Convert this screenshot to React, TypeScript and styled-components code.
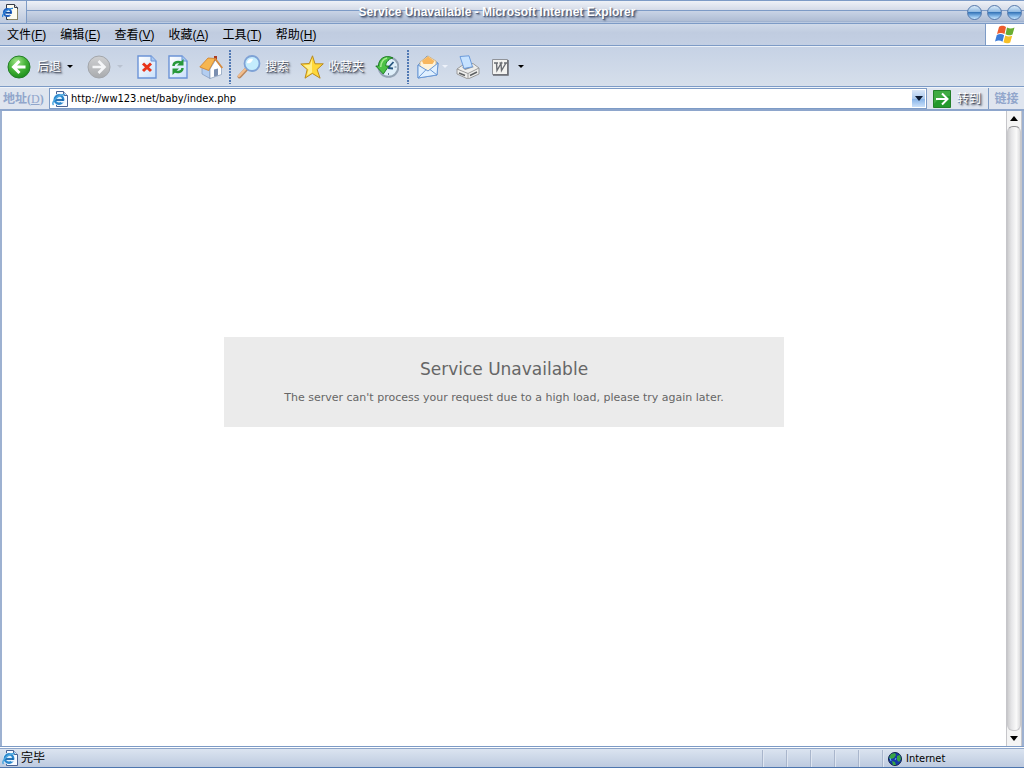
import React from 'react';
import styled, { createGlobalStyle, css } from 'styled-components';

const ui = '"Liberation Sans", "Noto Sans CJK SC", sans-serif';
const line = '#7d9bc6';

const Global = createGlobalStyle`
  * { box-sizing: border-box; }
  body { margin: 0; font: 12px/16px ${ui}; color: #000; }
  button { font: inherit; color: inherit; border: 0; padding: 0; background: none; }
  svg { display: block; flex: none; }
`;

const Window = styled.div`
  display: flex;
  flex-direction: column;
  min-height: 100vh;
  background: #cdd8e8;
`;

const TitleBar = styled.header`
  display: flex;
  height: 24px;
  border-top: 1px solid ${line};
  border-bottom: 1px solid ${line};
  background: linear-gradient(#e4e9f2, #bcc9de);
`;

const SystemIcon = styled.div`
  display: flex;
  align-items: center;
  width: 27px;
  padding-left: 2px;
  border-right: 1px solid ${line};
`;

const TitleTrack = styled.div`
  display: flex;
  flex: 1;
  align-items: center;
  padding-right: 2px;
  background: linear-gradient(#eef1f7, #d4dbe8 9px, ${line} 9px, ${line} 10px, #c9d4e6 10px, #afbdd4 20px, #93a9cb 21px, #e2eaf6 22px);
`;

const Title = styled.h1`
  flex: 1;
  margin: 0;
  font-size: 12px;
  line-height: 20px;
  text-align: center;
  color: #fff;
  text-shadow: 1px 1px 1px #45536f, 2px 2px 2px #64728c;
`;

const WindowButtons = styled.div`
  display: flex;
  gap: 5px;
`;

const Orb = styled.button`
  width: 15px;
  height: 15px;
  border: 1px solid #5478ab;
  border-radius: 50%;
  background: linear-gradient(#dcecf9, #8fb9e2 45%, #3a78ba 50%, #7db2e4 75%, #cbe8ff);
`;

const MenuBar = styled.nav`
  display: flex;
  height: 22px;
  border-bottom: 1px solid ${line};
  background: linear-gradient(#d0dae9, #c0cce0 40%, #c3cfe3);
`;

const MenuItems = styled.div`
  display: flex;
  flex: 1;
  align-items: center;
  gap: 14px;
  padding-left: 7px;
`;

const Brand = styled.div`
  display: flex;
  align-items: center;
  justify-content: center;
  width: 39px;
  border-left: 1px solid ${line};
  background: #fff;
`;

const ToolBar = styled.div`
  display: flex;
  align-items: center;
  height: 41px;
  border-top: 1px solid #eaf0f8;
  border-bottom: 1px solid ${line};
  background: linear-gradient(#c6d2e5, #d6dfeb);
`;

const Cluster = styled.div<{ $gap: number; $start: number; $end: number }>`
  display: flex;
  align-items: center;
  gap: ${(p) => p.$gap}px;
  padding-left: ${(p) => p.$start}px;
  padding-right: ${(p) => p.$end}px;
`;

const ToolButton = styled.button<{ $gap?: number; $end?: number }>`
  display: flex;
  align-items: center;
  gap: ${(p) => p.$gap ?? 4}px;
  padding-right: ${(p) => p.$end ?? 0}px;
`;

const shadowed = css`
  color: #fff;
  text-shadow: 1px 1px 1px #3c4353, 2px 2px 2px #636b7c;
`;

const ToolLabel = styled.span`
  ${shadowed}
`;

const Caret = styled.span<{ $color?: string }>`
  border: 3px solid transparent;
  border-top-color: ${(p) => p.$color ?? '#000'};
  border-bottom: 0;
`;

const Divider = styled.div`
  width: 2px;
  height: 34px;
  background: repeating-linear-gradient(#5179b4 0 2px, transparent 2px 3px);
`;

const AddressBar = styled.form`
  display: flex;
  align-items: center;
  height: 24px;
  border-top: 1px solid #eff4fa;
  border-bottom: 2px solid #8ea6cc;
  background: #dfe5ef;
`;

const AddressLabel = styled.label`
  width: 49px;
  padding-left: 3px;
  font: bold 12px/16px "Liberation Serif", "Noto Sans CJK SC", serif;
  color: #91a6cb;

  u { font-weight: normal; }
`;

const AddressField = styled.div`
  display: flex;
  flex: 1;
  align-items: center;
  height: 21px;
  padding: 1px 1px 1px 2px;
  border: 1px solid ${line};
  background: #fff;
`;

const AddressInput = styled.input`
  flex: 1;
  min-width: 0;
  padding: 1px 0 0 3px;
  border: 0;
  outline: 0;
  background: none;
  color: #000;
  font: 11px/16px "DejaVu Sans Condensed", "DejaVu Sans", sans-serif;
`;

const DropButton = styled.button`
  display: flex;
  align-items: center;
  justify-content: center;
  width: 13px;
  height: 17px;
  background: linear-gradient(#d9e6f8, #a9c8ee 50%, #8ab5e8 55%, #cbe1fa);
`;

const DropArrow = styled.span`
  border: 4px solid transparent;
  border-top: 5px solid #0b1a33;
  border-bottom: 0;
`;

const GoButton = styled.button`
  display: flex;
  align-items: center;
  gap: 6px;
  width: 61px;
  padding-left: 6px;
  ${shadowed}
`;

const Links = styled.button`
  && {
    width: 36px;
    height: 21px;
    border-left: 1px solid ${line};
    font-weight: bold;
    color: #91a6cb;
  }
`;

const Viewport = styled.div`
  display: flex;
  flex: 1;
  border: solid #9db1d1;
  border-width: 0 2px;
  background: #fff;
`;

const Page = styled.main`
  display: flex;
  flex: 1;
  flex-direction: column;
  align-items: center;
  justify-content: center;
  padding-bottom: 94px;
`;

const Notice = styled.section`
  width: 560px;
  max-width: 100%;
  padding: 20px 0;
  text-align: center;
  color: #666;
  background: #ebebeb;
  font-family: "DejaVu Sans", sans-serif;

  h2 {
    margin: 0 0 8px;
    font-size: 17px;
    font-weight: normal;
    line-height: 24px;
  }

  p {
    margin: 0;
    font-size: 11px;
    line-height: 18px;
  }
`;

const ScrollBar = styled.div`
  display: flex;
  flex-direction: column;
  width: 16px;
  border: solid #c6c6ca;
  border-width: 0 1px;
  background: #f3f3f3;
`;

const ScrollButton = styled.button`
  display: flex;
  align-items: center;
  justify-content: center;
  height: 15px;
  background: #f4f4f4;
`;

const ScrollArrow = styled.span<{ $up?: boolean }>`
  border: 4px solid transparent;
  ${(p) => (p.$up ? 'border-top: 0; border-bottom: 5px solid #000;' : 'border-bottom: 0; border-top: 5px solid #000;')}
`;

const Thumb = styled.div`
  flex: 1;
  border: 1px solid #c9c9cc;
  border-top-color: #8f8f92;
  border-radius: 6px;
  background: linear-gradient(90deg, #cfcfd1, #e6e6e8 30%, #fafafa 70%, #dcdcde);
`;

const StatusBar = styled.footer`
  display: flex;
  height: 22px;
  border-top: 1px solid ${line};
  border-bottom: 1px solid #4e76ae;
  background: linear-gradient(#fff 1px, #8fa6ca 1px 2px, #dbe4f0 2px, #bdcadf);
`;

const StatusText = styled.div`
  display: flex;
  flex: 1;
  align-items: center;
  gap: 3px;
  padding: 2px 0 0 2px;
`;

const StatusCell = styled.div<{ $wide?: boolean }>`
  display: flex;
  align-items: center;
  gap: 4px;
  width: ${(p) => (p.$wide ? 142 : 24)}px;
  margin-top: 3px;
  padding-left: 5px;
  border-left: 1px solid #a9b6cc;
  box-shadow: inset 1px 0 #dfe6f1;
  font: 11px/16px "DejaVu Sans Condensed", "DejaVu Sans", sans-serif;
`;

const IEPage = () => (
  <svg width="16" height="16" viewBox="0 0 16 16" aria-hidden="true">
    <path d="M4.500.5h7l4 4v11h-11z" fill="#f7faff" stroke="#4a6394" />
    <path d="M11.500.5v4h4" fill="#d5e2f5" stroke="#4a6394" />
    <circle cx="7" cy="8.500" r="6" fill="#eaf6ff" />
    <circle cx="7" cy="8.500" r="4.200" fill="#dff0fc" stroke="#2a86cc" strokeWidth="2.400" />
    <path d="M3.500 9h8" stroke="#1765ad" strokeWidth="1.800" />
    <path d="M9 10.800h4" stroke="#f0f7ff" strokeWidth="1.600" />
    <path d="M1.500 14C-1.500 11 7 3 13 3.500" fill="none" stroke="#4ba6df" strokeWidth="1.500" />
  </svg>
);

const TitlePage = () => (
  <svg width="17" height="17" viewBox="0 0 17 17" aria-hidden="true">
    <path d="M4.500.5h8l3 3v12h-11z" fill="#fdfcf0" stroke="#333a48" />
    <path d="M12.500.5v3h3" fill="#ddd" stroke="#333a48" />
    <path d="M6 15.500h9.500V5" fill="none" stroke="#8b8460" />
    <circle cx="5.500" cy="8.500" r="3.600" fill="#dff0fc" stroke="#1d5fc0" strokeWidth="2" />
    <path d="M2.500 8.800h6.500" stroke="#0f4398" strokeWidth="1.600" />
    <path d="M7.500 10.600h3" stroke="#fdfcf0" strokeWidth="1.400" />
    <path d="M.8 13C-.5 10 6 4 11 4.500" fill="none" stroke="#2f86d8" strokeWidth="1.300" />
  </svg>
);

const Back = () => (
  <svg width="24" height="24" viewBox="0 0 24 24" aria-hidden="true">
    <defs><radialGradient id="green" cx=".4" cy=".25" r=".8"><stop stopColor="#a2e58a" /><stop offset=".5" stopColor="#48b43a" /><stop offset="1" stopColor="#188b18" /></radialGradient></defs>
    <circle cx="12" cy="12" r="11" fill="url(#green)" stroke="#237e28" />
    <path d="M18.500 12H7M12.500 6L6.500 12l6 6" fill="none" stroke="#fff" strokeWidth="3" />
  </svg>
);

const Forward = () => (
  <svg width="24" height="24" viewBox="0 0 24 24" aria-hidden="true">
    <defs><linearGradient id="gray" x2="0" y2="1"><stop stopColor="#cfd0d2" /><stop offset="1" stopColor="#a9abae" /></linearGradient></defs>
    <circle cx="12" cy="12" r="11" fill="url(#gray)" stroke="#a3a6ab" />
    <path d="M5.500 12H17M11.500 6l6 6-6 6" fill="none" stroke="#f5f6f8" strokeWidth="2.600" />
  </svg>
);

const Sheet = ({ children }: { children: React.ReactNode }) => (
  <svg width="20" height="24" viewBox="0 0 20 24" aria-hidden="true">
    <defs><linearGradient id="sheet" x2="1" y2="1"><stop stopColor="#fff" /><stop offset="1" stopColor="#c9e0fb" /></linearGradient></defs>
    <path d="M1 1h13l5 5v17H1z" fill="url(#sheet)" stroke="#6b93d6" strokeWidth="1.400" />
    <path d="M14 1v5h5" fill="#a9c9f3" stroke="#6b93d6" />
    {children}
  </svg>
);

const Home = () => (
  <svg width="24" height="24" viewBox="0 0 24 24" aria-hidden="true">
    <path d="M15 1h3v5h-3z" fill="#a93c26" />
    <path d="M3 12l8 3v8.500L3 19z" fill="#b3cdf0" stroke="#7f98bd" strokeWidth=".7" />
    <path d="M11 14l5.500-9 6 8v6.500L11 23.500z" fill="#fff" stroke="#8299b8" strokeWidth=".7" />
    <path d="M.8 12L9 3l7.500.5-6.800 12z" fill="#f6b651" stroke="#cf7d28" strokeWidth=".8" />
    <path d="M16 3.500l7.300 9.500" stroke="#d98b3d" strokeWidth="1.800" />
    <path d="M15 14.500l4-1v7l-4 1.300z" fill="#7a8fb0" />
  </svg>
);

const Search = () => (
  <svg width="24" height="24" viewBox="0 0 24 24" aria-hidden="true">
    <path d="M9.500 14l-7 7.500" stroke="#b98860" strokeWidth="4" strokeLinecap="round" />
    <path d="M9 13.500l-7 7.500" stroke="#f2bd8b" strokeWidth="2.400" strokeLinecap="round" />
    <circle cx="15" cy="8.500" r="7.500" fill="#c4ecfd" stroke="#7fa2d6" strokeWidth="1.800" />
    <path d="M10 8c0-3 3-5 6-4-1 3-3 5-6 4z" fill="#fff" />
  </svg>
);

const Star = () => (
  <svg width="24" height="24" viewBox="0 0 24 24" aria-hidden="true">
    <path d="M12.500.8l2.500 8 8.300 0-6.200 5.700 3 8.700-7.800-4.800-7.300 4.800 2.200-8.700L.8 9l8.500-.5z" fill="#ffd83a" stroke="#b88a22" strokeLinejoin="round" />
    <path d="M12 4v13.500l-5 3 1.500-6L3.500 10.300l6.500-.6z" fill="#fff08f" />
  </svg>
);

const History = () => (
  <svg width="24" height="24" viewBox="0 0 24 24" aria-hidden="true">
    <circle cx="13.500" cy="12" r="9.800" fill="#dfeffa" stroke="#93a3b4" strokeWidth="2" />
    <path d="M13.500 4v2M21.500 12h-2M13.500 20v-2" stroke="#607890" />
    <path d="M13 13l5.500-6M13 13l5 .5" stroke="#28567f" strokeWidth="1.800" />
    <path d="M18 3C10-1 3.500 4 3.500 11H.8l7.500 8 5.500-8h-3c0-4 2.200-7 7.200-8z" fill="#4cc246" stroke="#16761e" strokeWidth=".9" />
    <path d="M12 3c-4 1-6 4-6.300 9" fill="none" stroke="#a8eb93" strokeWidth="1.500" />
  </svg>
);

const Mail = () => (
  <svg width="24" height="24" viewBox="0 0 24 24" aria-hidden="true">
    <path d="M2 10l9-9 11 7-1 12-19 3z" fill="#acd1f8" stroke="#6a98d5" />
    <path d="M4 12V7l8-6 8 5v6l-8 5z" fill="#fff3d9" stroke="#cda66b" strokeWidth=".7" />
    <path d="M6 6l6-4.500L18.500 6l-2 3h-9z" fill="#f8b75e" />
    <path d="M2 10l10 6 10-8-1 12-19 3z" fill="#e0f0ff" stroke="#6a98d5" />
    <path d="M2 23l8-8.300M14 14.500l7 5.500" fill="none" stroke="#6a98d5" />
  </svg>
);

const Printer = () => (
  <svg width="24" height="24" viewBox="0 0 24 24" aria-hidden="true">
    <path d="M1 14l5-3.500 11-2 6 4.500v6l-11 5-11-5z" fill="#eeeeec" stroke="#9a9a9a" />
    <path d="M6 12l9-1.500 3 1.500-9 3z" fill="#8f959c" />
    <path d="M4 1.500L13 .8l3.500 11L8 13.500z" fill="#c6e2ff" stroke="#6c9bdb" />
    <path d="M1 14l11 4.500L23 13M12 18.500V24" fill="none" stroke="#9a9a9a" />
    <path d="M3 18l6 2.500M14 20.500l7-3.500" stroke="#5d6062" strokeWidth="1.500" />
  </svg>
);

const WordIcon = () => (
  <svg width="24" height="24" viewBox="0 0 24 24" aria-hidden="true">
    <path d="M4.500 4.500h15v15h-15z" fill="#f3f3f1" stroke="#909399" />
    <path d="M20 5v15H5" fill="none" stroke="#686b71" strokeWidth="1.500" />
    <path d="M6 8h4M11.500 8h3M16 8h3M8.500 8L9 15.500 13 8.500l.5 7L18 8" fill="none" stroke="#6a6d73" strokeWidth="1.400" />
  </svg>
);

const Flag = () => (
  <svg width="20" height="19" viewBox="0 0 20 19" aria-hidden="true">
    <path d="M4 2c3-2 5-1 7 0L9.500 9C7 7.500 5 7.500 2 9z" fill="#ed5c2d" />
    <path d="M12 2.500c3 1.500 5 1 7.500 0l-2 7c-3 1.300-5 1-7-.3z" fill="#69ad31" />
    <path d="M1.800 10c3-1.500 5-1.300 7.300.2l-1.600 6.500C5 15 3 15 0 16.500z" fill="#3c7cd8" />
    <path d="M10.200 10.500c2.500 1.300 4 1.500 7 .3l-2 6.700c-3 1.300-4.500 1-6.700-.3z" fill="#f7bf25" />
  </svg>
);

const Go = () => (
  <svg width="18" height="18" viewBox="0 0 18 18" aria-hidden="true">
    <path d="M.5.5h17v17H.5z" fill="#249a2c" stroke="#23802a" />
    <path d="M1 1h16v5C10 6 5 9 1 14z" fill="#5bbb58" opacity=".5" />
    <path d="M3 9h11.500M9 3.500L14.500 9 9 14.500" fill="none" stroke="#fff" strokeWidth="2" />
  </svg>
);

const Globe = () => (
  <svg width="14" height="14" viewBox="0 0 14 14" aria-hidden="true">
    <circle cx="7" cy="7" r="6.500" fill="#1537a8" stroke="#0d2149" />
    <path d="M3 2l4-1 1 2-2 3-3 1-2-1zM9 4l3-1 1 4-2 3-2-2zM4 9l3 1 1 3H5z" fill="#38a544" />
    <path d="M2 6l1 3M8 6l-1 2" stroke="#62b9f0" />
  </svg>
);

const menus = [['文件', 'F'], ['编辑', 'E'], ['查看', 'V'], ['收藏', 'A'], ['工具', 'T'], ['帮助', 'H']];

export default function App() {
  return (
    <Window>
      <Global />
      <TitleBar>
        <SystemIcon><TitlePage /></SystemIcon>
        <TitleTrack>
          <Title>Service Unavailable - Microsoft Internet Explorer</Title>
          <WindowButtons>
            <Orb aria-label="Minimize" />
            <Orb aria-label="Maximize" />
            <Orb aria-label="Close" />
          </WindowButtons>
        </TitleTrack>
      </TitleBar>
      <MenuBar>
        <MenuItems>
          {menus.map(([name, key]) => (
            <button key={key}>{name}(<u>{key}</u>)</button>
          ))}
        </MenuItems>
        <Brand><Flag /></Brand>
      </MenuBar>
      <ToolBar>
        <Cluster $gap={8} $start={7} $end={8}>
          <ToolButton $gap={6} $end={6}><Back /><ToolLabel>后退</ToolLabel><Caret /></ToolButton>
          <ToolButton $gap={6} $end={6} aria-label="Forward"><Forward /><Caret $color="#b9c2d0" /></ToolButton>
        </Cluster>
        <Cluster $gap={11} $start={0} $end={6}>
          <ToolButton aria-label="Stop">
            <Sheet><path d="M6 8.500l8 7.500M14 8.500L6 16" stroke="#e8341a" strokeWidth="3" /></Sheet>
          </ToolButton>
          <ToolButton aria-label="Refresh">
            <Sheet>
              <path d="M5.500 11c0-4 5-5 8-3" fill="none" stroke="#27983a" strokeWidth="2.400" />
              <path d="M15.500 4v6.500H9z" fill="#27983a" />
              <path d="M14.500 13c0 4-5 5-8 3" fill="none" stroke="#27983a" strokeWidth="2.400" />
              <path d="M4.500 20v-6.500H11z" fill="#27983a" />
            </Sheet>
          </ToolButton>
          <ToolButton aria-label="Home"><Home /></ToolButton>
        </Cluster>
        <Divider />
        <Cluster $gap={11} $start={6} $end={8}>
          <ToolButton><Search /><ToolLabel>搜索</ToolLabel></ToolButton>
          <ToolButton><Star /><ToolLabel>收藏夹</ToolLabel></ToolButton>
          <ToolButton aria-label="History"><History /></ToolButton>
        </Cluster>
        <Divider />
        <Cluster $gap={8} $start={7} $end={0}>
          <ToolButton $gap={2} aria-label="Mail"><Mail /><Caret $color="#edf2fa" /></ToolButton>
          <ToolButton aria-label="Print"><Printer /></ToolButton>
          <ToolButton $gap={6} $end={0} aria-label="Edit"><WordIcon /><Caret /></ToolButton>
        </Cluster>
      </ToolBar>
      <AddressBar onSubmit={(e) => e.preventDefault()}>
        <AddressLabel htmlFor="address">地址(<u>D</u>)</AddressLabel>
        <AddressField>
          <IEPage />
          <AddressInput id="address" defaultValue="http://ww123.net/baby/index.php" />
          <DropButton type="button" aria-label="Show addresses"><DropArrow /></DropButton>
        </AddressField>
        <GoButton type="submit"><Go />转到</GoButton>
        <Links type="button">链接</Links>
      </AddressBar>
      <Viewport>
        <Page>
          <Notice>
            <h2>Service Unavailable</h2>
            <p>The server can't process your request due to a high load, please try again later.</p>
          </Notice>
        </Page>
        <ScrollBar>
          <ScrollButton aria-label="Scroll up"><ScrollArrow $up /></ScrollButton>
          <Thumb />
          <ScrollButton aria-label="Scroll down"><ScrollArrow /></ScrollButton>
        </ScrollBar>
      </Viewport>
      <StatusBar>
        <StatusText><IEPage />完毕</StatusText>
        <StatusCell />
        <StatusCell />
        <StatusCell />
        <StatusCell />
        <StatusCell />
        <StatusCell $wide><Globe />Internet</StatusCell>
      </StatusBar>
    </Window>
  );
}
